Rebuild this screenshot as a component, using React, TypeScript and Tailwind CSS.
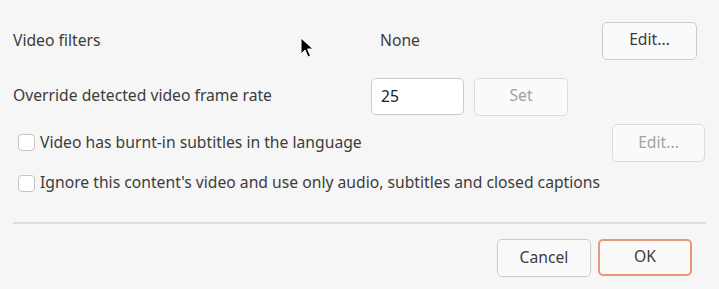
import React from "react";

const font = { fontFamily: '"Noto Sans", "Open Sans", sans-serif' };

const Btn: React.FC<{ label: string; disabled?: boolean; className?: string }> = ({
  label,
  disabled,
  className = "",
}) => (
  <button
    className={`h-[38px] rounded-[5px] border bg-[#fafafa] pb-[1px] text-[15.7px] ${
      disabled ? "border-[#dcdcdc] text-[#a3a3a3]" : "border-[#cbcbcb] text-[#3c3c3c]"
    } ${className}`}
  >
    {label}
  </button>
);

const Check: React.FC = () => (
  <span className="block h-[17px] w-[17px] shrink-0 rounded-[4px] border border-[#c4c4c4] bg-white" />
);

export default function App() {
  return (
    <div
      style={font}
      className="relative flex h-[289px] w-[719px] flex-col overflow-hidden bg-[#f6f6f6] pl-[13px] text-[15.7px] text-[#3c3c3c]"
    >
      {/* video filters */}
      <div className="mt-[22px] flex h-[38px] items-center pb-[1px]">
        <span className="w-[367px]">Video filters</span>
        <span className="flex-1">None</span>
        <Btn label="Edit..." className="mr-[22px] w-[95px]" />
      </div>

      {/* frame rate */}
      <div className="mt-[18px] flex h-[37px] items-center">
        <span className="w-[358px] pb-[1px]">Override detected video frame rate</span>
        <input
          defaultValue="25"
          style={font}
          className="h-[37px] w-[93px] rounded-[5px] border border-[#cbcbcb] bg-white px-[9px] pb-[1px] text-[15.7px] text-[#222] outline-none"
        />
        <Btn label="Set" disabled className="ml-[10px] h-[37px] w-[94px]" />
      </div>

      {/* burnt-in subs */}
      <div className="mt-[9px] flex h-[38px] items-center">
        <label className="flex flex-1 items-center gap-[5px] pl-[5px]">
          <Check />
          <span className="pb-[1px]">Video has burnt-in subtitles in the language</span>
        </label>
        <Btn label="Edit..." disabled className="mr-[14px] w-[93px]" />
      </div>

      <div className="mt-[11px] flex h-[20px] items-center">
        <label className="flex items-center gap-[5px] pl-[5px]">
          <Check />
          <span className="pb-[1px]">Ignore this content's video and use only audio, subtitles and closed captions</span>
        </label>
      </div>

      <div className="mr-[13px] mt-[29px] h-[2px] bg-[#dedede]" />

      <div className="mr-[27px] mt-[15px] flex justify-end gap-[7px]">
        <Btn label="Cancel" className="h-[37px] w-[94px]" />
        <button className="h-[37px] w-[94px] rounded-[5px] border-2 border-[#e9967b] bg-[#fafafa] pb-[1px] text-[15.7px] text-[#3c3c3c]">
          OK
        </button>
      </div>

      {/* mouse pointer */}
      <svg className="absolute left-[300px] top-[37px]" width="16" height="24" viewBox="0 0 16 24">
        <path d="M1 1 L1 17 L5 13 L8 20 L10.5 19 L7.5 12 L13 12 Z" fill="#000" stroke="#fff" strokeWidth="1" />
      </svg>
    </div>
  );
}
